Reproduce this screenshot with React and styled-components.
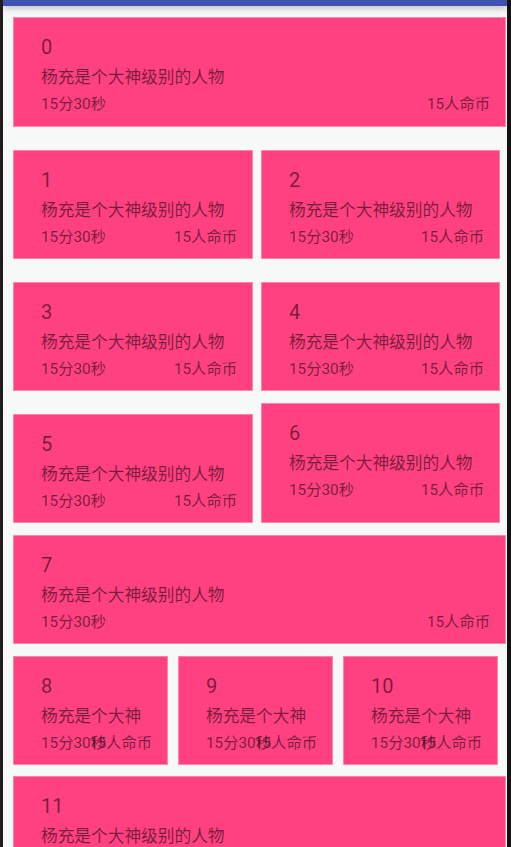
import React from "react";
import styled, { createGlobalStyle } from "styled-components";

const GlobalStyle = createGlobalStyle`
  html, body {
    margin: 0;
    padding: 0;
    overflow: hidden;
    background: #1c1c1c;
  }
`;

const Frame = styled.div`
  display: flex;
  height: 847px;
  background: #1c1c1c;
`;

const Edge = styled.div`
  width: ${(p) => p.$w}px;
  flex-shrink: 0;
  background: ${(p) => p.$color};
`;

const Screen = styled.div`
  flex: 1;
  display: flex;
  flex-direction: column;
  background: #f6f9f8;
  overflow: hidden;
`;

const StatusBar = styled.div`
  position: relative;
  z-index: 2;
  height: 6px;
  flex-shrink: 0;
  background: #3f51b5;
  box-shadow: 0 2px 7px rgba(0, 0, 0, 0.28);
`;

const List = styled.div`
  display: flex;
  flex-direction: column;
  padding: 11px 0 0 10px;
`;

const Row = styled.div`
  display: flex;
  align-items: flex-end;
  gap: ${(p) => p.$gap || 0}px;
  margin-top: ${(p) => p.$top || 0}px;
`;

const Card = styled.div`
  box-sizing: border-box;
  width: ${(p) => p.$w}px;
  height: ${(p) => p.$h}px;
  flex-shrink: 0;
  display: flex;
  flex-direction: column;
  padding: 17px 15px 0 27px;
  background: #ff4081;
  border: 1px solid #ff85ae;
  color: rgba(0, 0, 0, 0.54);
  overflow: hidden;
`;

const Num = styled.div`
  font-family: Roboto, "Noto Sans", sans-serif;
  font-size: 20px;
  line-height: 24px;
`;

const Title = styled.div`
  margin-top: 6px;
  height: 22px;
  overflow: hidden;
  word-break: break-all;
  font-family: "Noto Sans CJK SC", sans-serif;
  font-size: 16.7px;
  line-height: 22px;
`;

const Meta = styled.div`
  margin-top: 7px;
  display: grid;
  font-family: Roboto, "Noto Sans CJK SC", sans-serif;
  font-size: 15.3px;
  line-height: 20px;
  white-space: nowrap;
`;

const MetaText = styled.span`
  grid-area: 1 / 1;
  justify-self: ${(p) => (p.$end ? "end" : "start")};
`;

const Item = ({ n, w, h = 109 }) => (
  <Card $w={w} $h={h}>
    <Num>{n}</Num>
    <Title>杨充是个大神级别的人物</Title>
    <Meta>
      <MetaText>15分30秒</MetaText>
      <MetaText $end>15人命币</MetaText>
    </Meta>
  </Card>
);

export default function App() {
  return (
    <>
      <GlobalStyle />
      <Frame>
        <Edge $w={3} $color="#1f1c19" />
        <Screen>
          <StatusBar />
          <List>
            <Row>
              <Item n={0} w={493} h={110} />
            </Row>
            <Row $top={23} $gap={8}>
              <Item n={1} w={240} />
              <Item n={2} w={239} />
            </Row>
            <Row $top={23} $gap={8}>
              <Item n={3} w={240} />
              <Item n={4} w={239} />
            </Row>
            <Row $top={12} $gap={8}>
              <Item n={5} w={240} />
              <Item n={6} w={239} h={120} />
            </Row>
            <Row $top={12}>
              <Item n={7} w={493} />
            </Row>
            <Row $top={12} $gap={10}>
              <Item n={8} w={155} />
              <Item n={9} w={155} />
              <Item n={10} w={155} />
            </Row>
            <Row $top={11}>
              <Item n={11} w={493} h={110} />
            </Row>
          </List>
        </Screen>
        <Edge $w={4} $color="#121212" />
      </Frame>
    </>
  );
}
